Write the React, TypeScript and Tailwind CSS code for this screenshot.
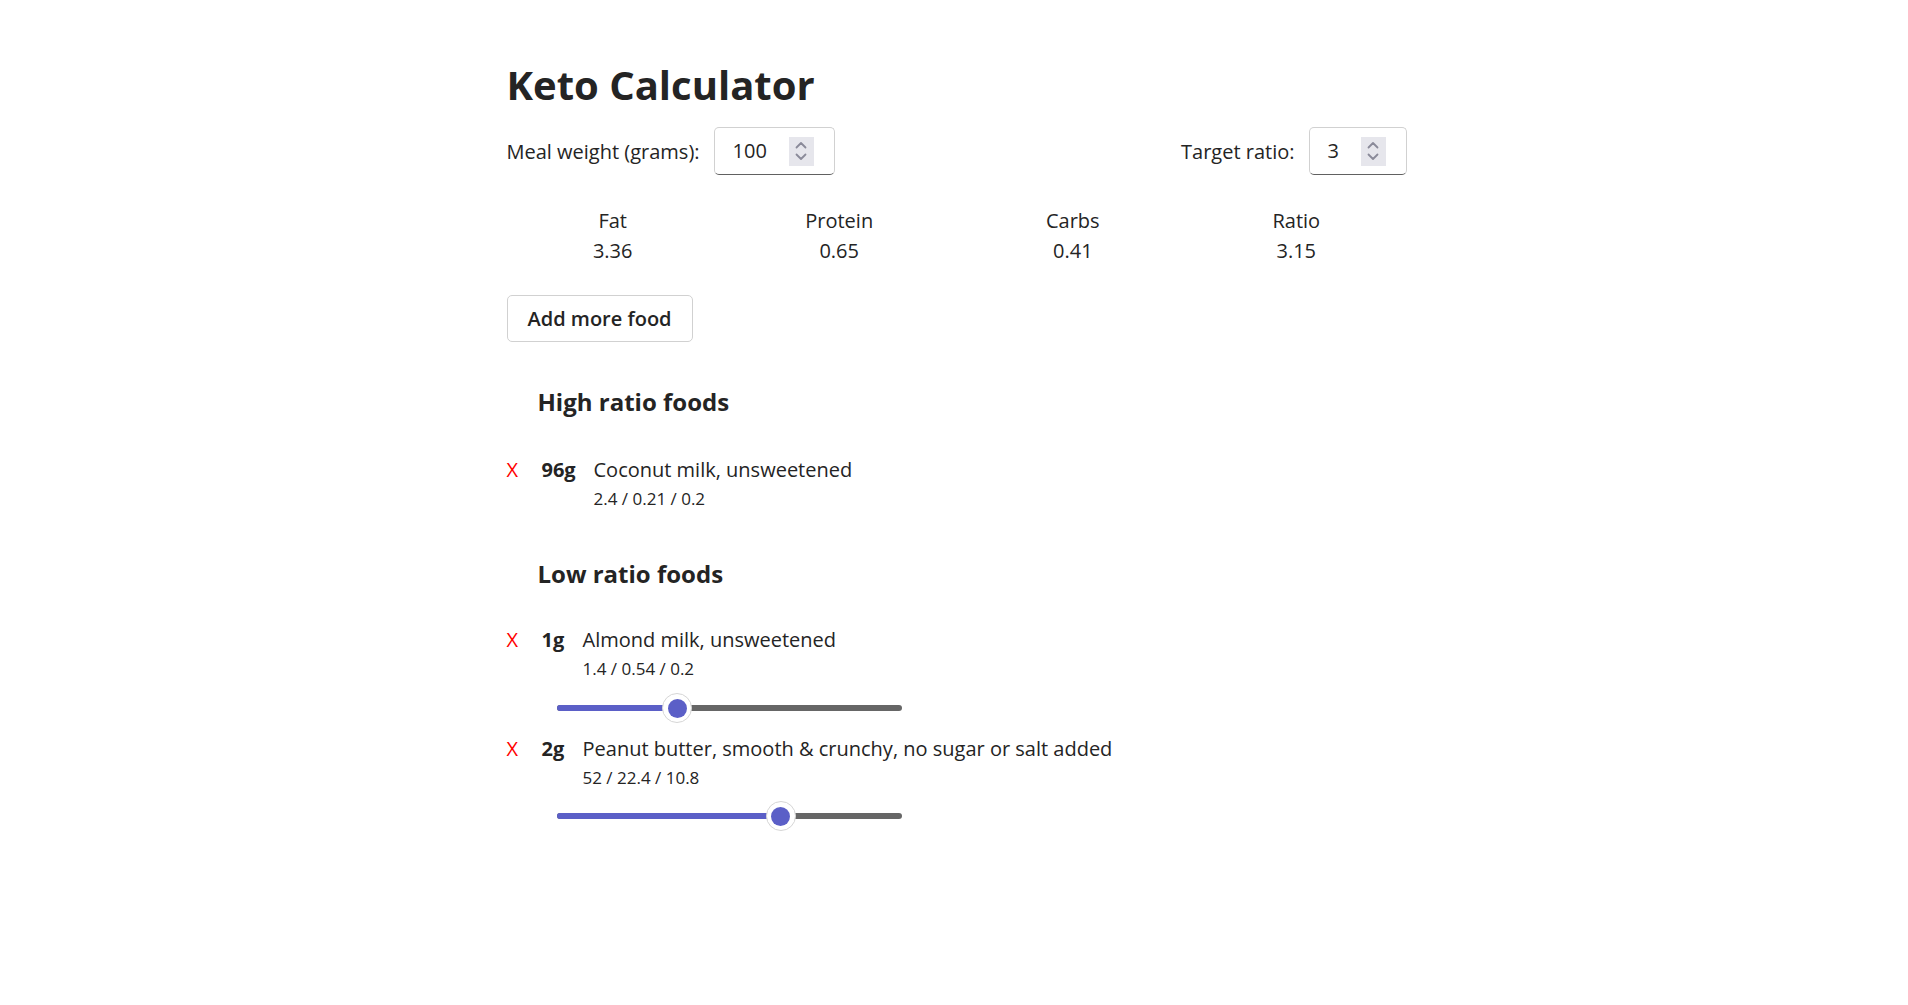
import React from "react"

function Spinner() {
  return (
    <div className="flex h-[29px] w-[25px] flex-col items-center justify-center bg-[#e6e6ec]">
      <svg width="14" height="24" viewBox="0 0 14 24" fill="none" stroke="#8a8a99" strokeWidth="1.8" strokeLinecap="round" strokeLinejoin="round">
        <path d="M2.5 8.5 7 4l4.5 4.5" />
        <path d="M2.5 15.5 7 20l4.5-4.5" />
      </svg>
    </div>
  )
}

function NumberBox({ value, width }: { value: string; width: string }) {
  return (
    <div className={`flex h-[48px] items-center justify-between rounded-[5px] border border-[#d1d1d1] border-b-[#616161] bg-white pl-[18px] pr-[20px] ${width}`}>
      <span>{value}</span>
      <Spinner />
    </div>
  )
}

function Slider({ pct }: { pct: number }) {
  return (
    <div className="relative ml-[50px] flex h-[30px] w-[345px] items-center">
      <div className="h-[6px] w-full rounded-full bg-[#666666]" />
      <div className="absolute left-0 top-[12px] h-[6px] rounded-full bg-[#5b5fc7]" style={{ width: `${pct}%` }} />
      <div
        className="absolute top-0 flex h-[30px] w-[30px] -translate-x-1/2 items-center justify-center rounded-full border border-[#d6d6d6] bg-white"
        style={{ left: `${pct}%` }}
      >
        <div className="h-[19px] w-[19px] rounded-full bg-[#5b5fc7]" />
      </div>
    </div>
  )
}

const stats = [
  { label: "Fat", value: "3.36" },
  { label: "Protein", value: "0.65" },
  { label: "Carbs", value: "0.41" },
  { label: "Ratio", value: "3.15" },
]

function FoodRow({ grams, name, macros, gramsWidth }: { grams: string; name: string; macros: string; gramsWidth: string }) {
  return (
    <div>
      <div className="flex h-[28px] items-center leading-[28px]">
        <span className="w-[35px] text-[#ff0000]">X</span>
        <span className={`font-bold ${gramsWidth}`}>{grams}</span>
        <span>{name}</span>
      </div>
      <div className="mt-[4px] flex text-[17px] leading-[22px]">
        <span className="w-[35px]" />
        <span className={gramsWidth} />
        <span>{macros}</span>
      </div>
    </div>
  )
}

export default function App() {
  return (
    <div className="min-h-screen bg-white pl-[5px] font-['Segoe_UI','Open_Sans',sans-serif] text-[20px] text-[#242424]">
      <div className="mx-auto w-[900px] pt-[61px]">
        <h1 className="text-[40px] font-bold leading-[48px]">Keto Calculator</h1>

        <div className="mt-[18px] flex items-center justify-between">
          <div className="flex items-center gap-[14px]">
            <span className="pt-[1px]">Meal weight (grams):</span>
            <NumberBox value="100" width="w-[121px]" />
          </div>
          <div className="flex items-center gap-[14px]">
            <span className="pt-[1px]">Target ratio:</span>
            <NumberBox value="3" width="w-[98px]" />
          </div>
        </div>

        <div className="mt-[31px] flex justify-around">
          {stats.map(s => (
            <div key={s.label} className="flex flex-col items-center leading-[30px]">
              <span>{s.label}</span>
              <span>{s.value}</span>
            </div>
          ))}
        </div>

        <button className="mt-[29px] h-[47px] rounded-[5px] border border-[#d1d1d1] bg-white px-[20px] font-semibold">
          Add more food
        </button>

        <h3 className="ml-[31px] mt-[45px] text-[24px] font-bold leading-[30px]">High ratio foods</h3>
        <div className="mt-[39px]">
          <FoodRow grams="96g" name="Coconut milk, unsweetened" macros="2.4 / 0.21 / 0.2" gramsWidth="w-[52px]" />
        </div>

        <h3 className="ml-[31px] mt-[49px] text-[24px] font-bold leading-[30px]">Low ratio foods</h3>
        <div className="mt-[37px]">
          <FoodRow grams="1g" name="Almond milk, unsweetened" macros="1.4 / 0.54 / 0.2" gramsWidth="w-[41px]" />
          <div className="mt-[13px]">
            <Slider pct={35} />
          </div>
        </div>
        <div className="mt-[12px]">
          <FoodRow grams="2g" name="Peanut butter, smooth & crunchy, no sugar or salt added" macros="52 / 22.4 / 10.8" gramsWidth="w-[41px]" />
          <div className="mt-[12px]">
            <Slider pct={65} />
          </div>
        </div>
      </div>
    </div>
  )
}
